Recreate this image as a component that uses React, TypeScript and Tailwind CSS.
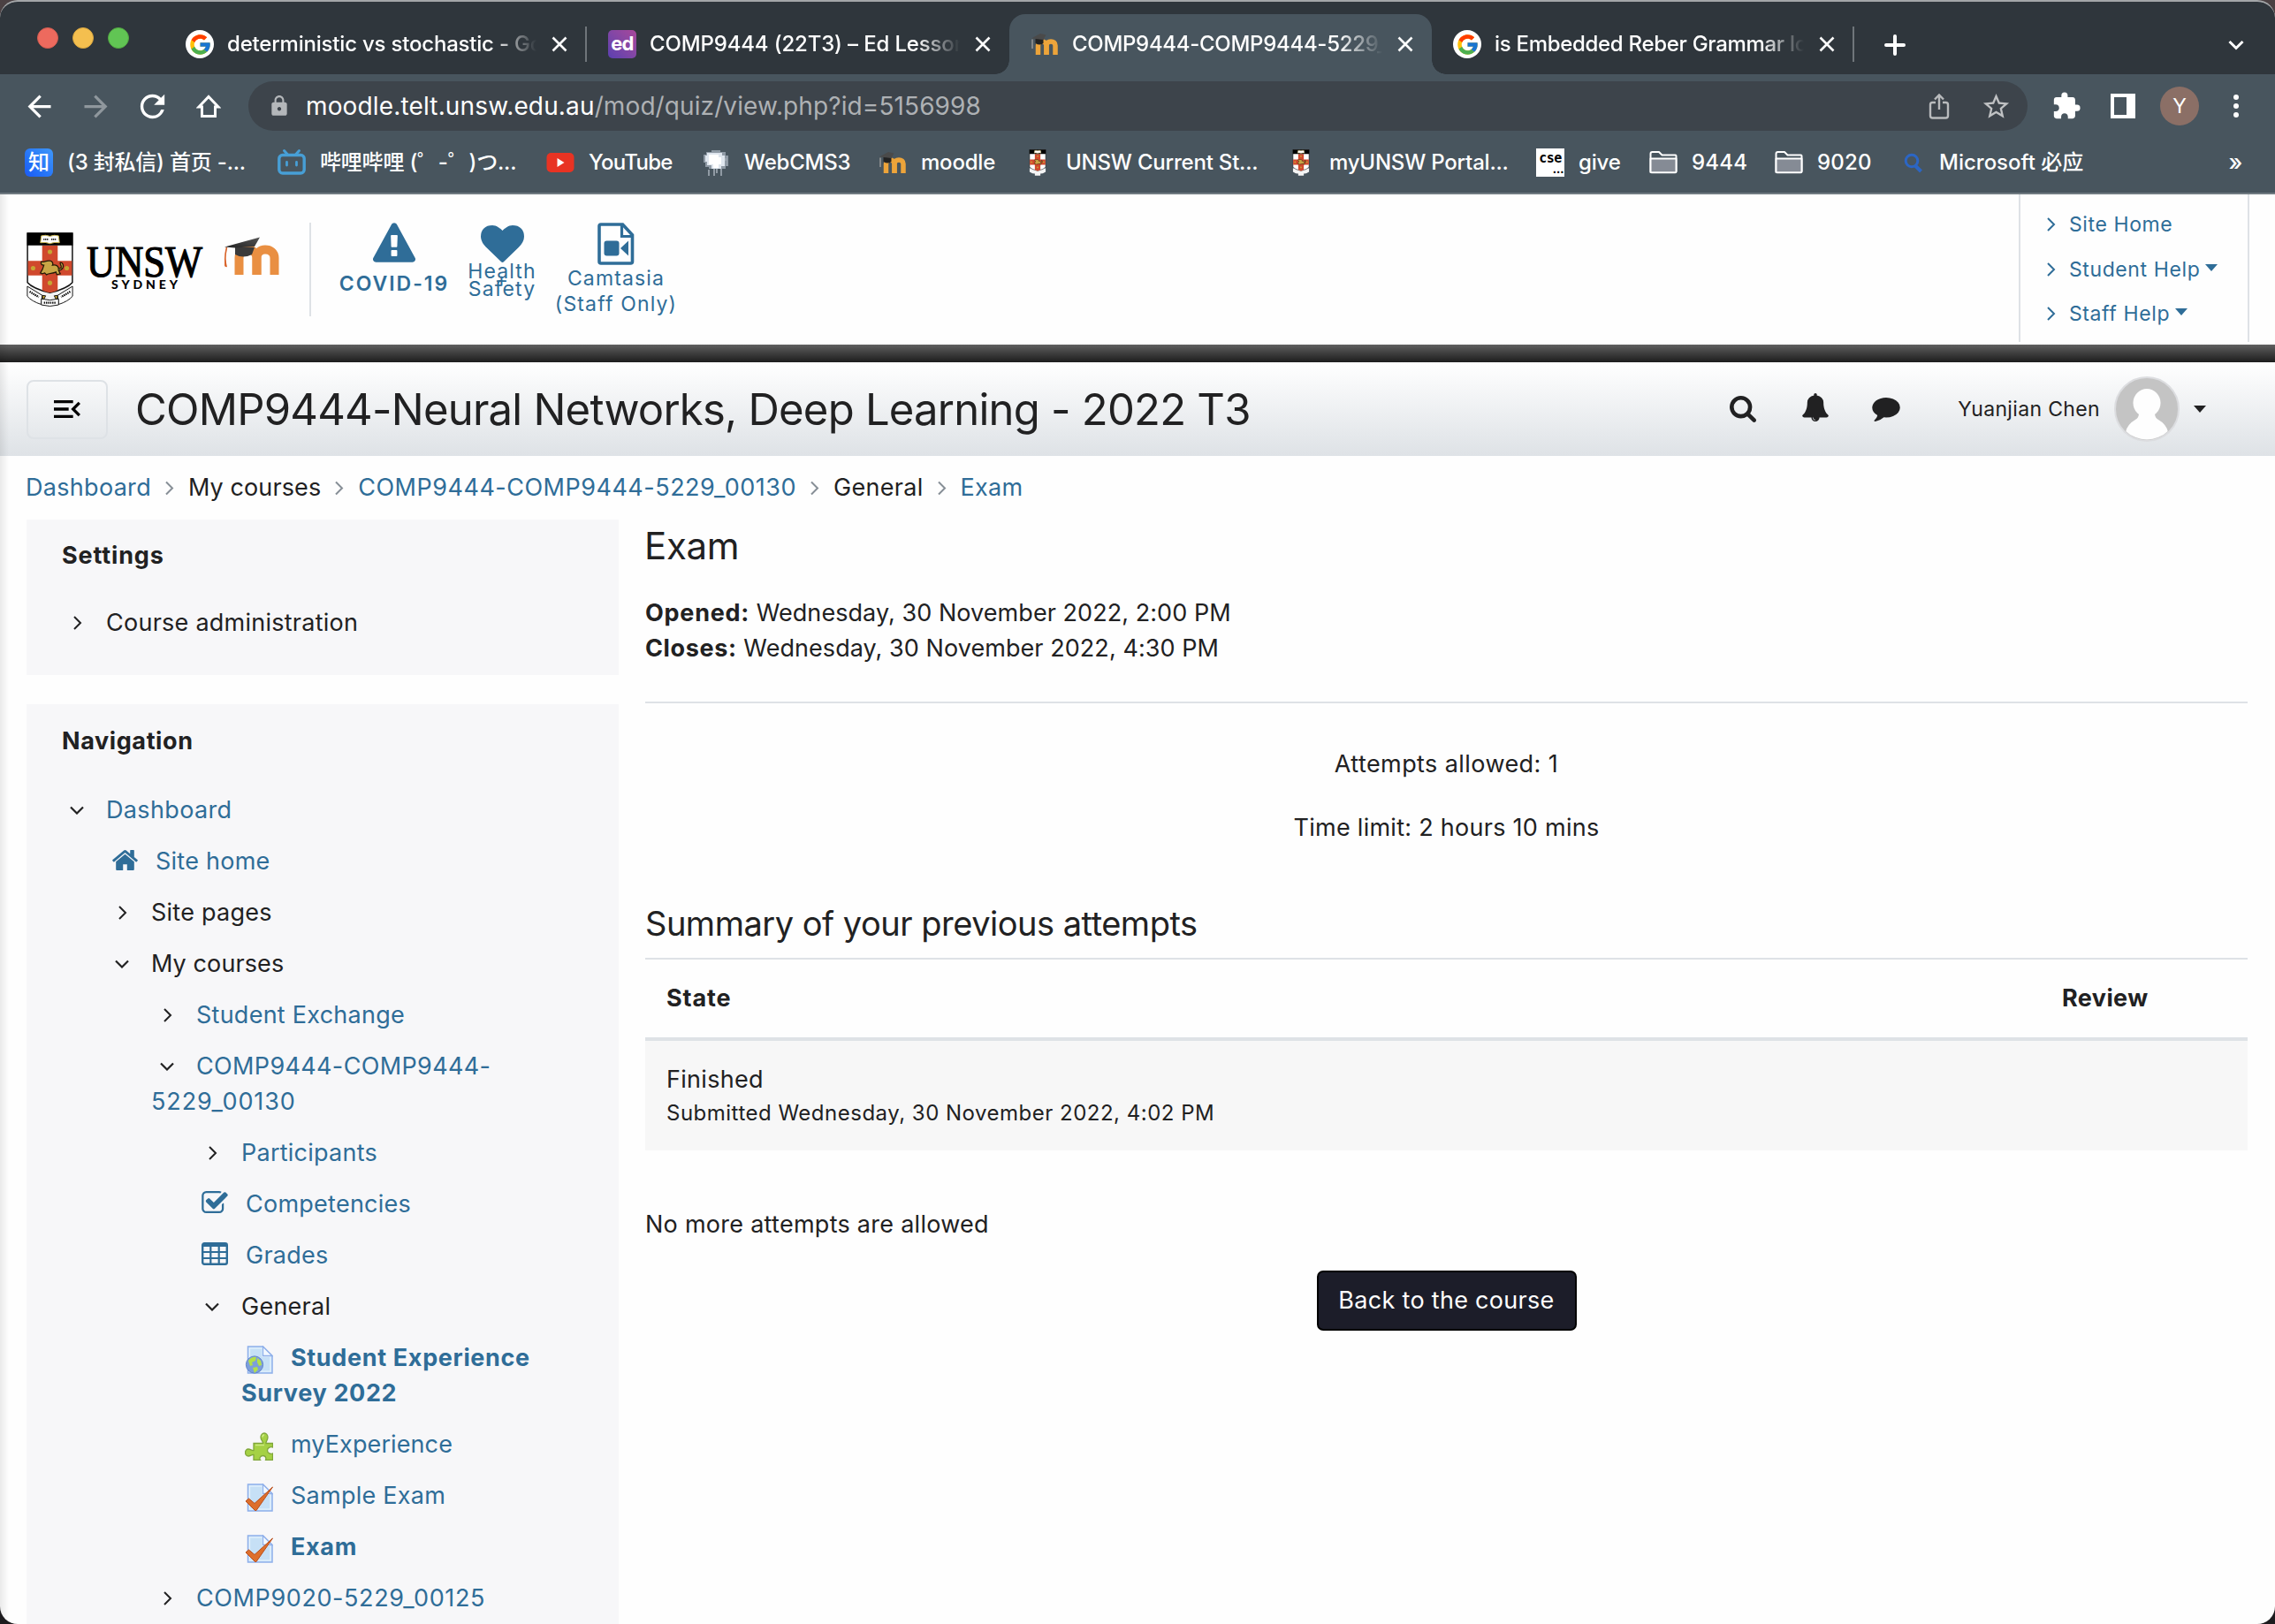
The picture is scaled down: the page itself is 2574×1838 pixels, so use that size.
import React from "react";
import { FcGoogle } from "react-icons/fc";
import {
  MdArrowBack,
  MdArrowForward,
  MdRefresh,
  MdStarBorder,
  MdExtension,
  MdMenuOpen,
  MdLock,
} from "react-icons/md";

/* ---------- small drawings ---------- */

function CloseX() {
  return (
    <svg className="size-[18px] shrink-0" viewBox="0 0 18 18" fill="none" stroke="#fff" strokeWidth="2.6">
      <path d="M1.5 1.5 16.5 16.5M16.5 1.5 1.5 16.5" />
    </svg>
  );
}

function GoogleIcon() {
  return (
    <span className="flex size-8 items-center justify-center rounded-full bg-white">
      <FcGoogle className="size-[27px]" />
    </span>
  );
}

function EdIcon() {
  return (
    <span className="flex size-8 items-center justify-center rounded-[5px] bg-linear-to-tr from-[#5b3fb0] to-[#a8479a] pb-[3px] text-[22px] leading-none font-bold tracking-[-0.8px] text-white">
      ed
    </span>
  );
}

function MoodleMark({ className }: { className: string }) {
  return (
    <svg className={className} viewBox="0 0 64 44" fill="none">
      <defs>
        <linearGradient id="mo" x1="0" x2="1">
          <stop offset="0" stopColor="#e5813d" />
          <stop offset="1" stopColor="#ee9a45" />
        </linearGradient>
        <linearGradient id="cap" x1="0" x2="1" y1="1" y2="0">
          <stop offset="0" stopColor="#222" />
          <stop offset="1" stopColor="#555" />
        </linearGradient>
      </defs>
      <g stroke="#e98f42" strokeWidth="10">
        <path d="M17.500 43V24c0-6 4-9.500 9-9.500s11 3 11 9.500v19" />
        <path d="M37.500 43V24c0-6 4-9.500 9.500-9.500s10.500 3 10.500 9.500v19" />
      </g>
      <path d="M13 11.500v8.500q9 5 19 0l3-8z" fill="#3a3a3a" />
      <path d="M1 11.500 41 .5l-6 10.500-22 1.500z" fill="url(#cap)" />
      <path d="M3.500 12c-1.500 6-2.500 14-1 22" stroke="#d9632a" strokeWidth="1.600" />
      <path d="M2 24l2 10.500-3-2z" fill="#d9632a" />
    </svg>
  );
}

function MoodleFavicon() {
  return (
    <svg className="size-8" viewBox="0 0 32 32" fill="none">
      <g stroke="#eda43a" strokeWidth="5.500">
        <path d="M8.500 28V17.500c0-3 2-4.500 4.500-4.500s5 1.500 5 4.500V28" />
        <path d="M18 28V17.500c0-3 2-4.500 5-4.500s5 1.500 5 4.500V28" />
      </g>
      <path d="M5.500 10v5q5 3 9 0V9z" fill="#222" />
      <path d="M1 9.500 11 4l6.500 1.500L14.500 11z" fill="#4a4a4a" />
      <path d="M2 10.500V21" stroke="#999" strokeWidth="1.500" />
    </svg>
  );
}

function Crest({ className, detailed }: { className: string; detailed?: boolean }) {
  return (
    <svg className={className} viewBox="0 0 54 86">
      <path d="M1 61 27 69l26-8v12l-9 5-8 1v6H18v-6l-8-1-9-5z" fill="#f4f4f4" />
      <path d="M1 1h52v57q-6 7-26 12Q7 65 1 58z" fill="#fff" stroke="#111" strokeWidth="1.500" />
      <path d="M18 15h18v52q-4 2-9 3-5-1-9-3z" fill="#d0492d" />
      <path d="M1.500 33h51v17h-51z" fill="#d0492d" />
      <path d="M.5.500h53V15H.5z" fill="#000" />
      <path d="M17 4q5-1.500 10 .5 5-2 10-.5l1 8q-6-1-11 1-5-2-11-1z" fill="#fff" stroke="#c9b44d" strokeWidth="1" />
      {detailed && <path d="M19.500 8h6M28.500 8h6" stroke="#222" strokeWidth="1.800" strokeDasharray="1.300 .6" />}
      <g fill="#c6a634">
        <circle cx="27" cy="22.500" r="2.600" />
        <circle cx="7.500" cy="41.500" r="2.600" />
        <circle cx="46.500" cy="41.500" r="2.600" />
        <circle cx="27" cy="58.500" r="2.600" />
      </g>
      <path
        d="M16 47c2-3 3-5 4-9-3 0-4-2-3-4 3 1 6-2 10-1 3 .5 4 3 3 5 4-1 7 1 7 4l3-1c1-3-2-4-1-6 3 0 4 3 3 6-1 2-3 3-5 3l2 4-4 1-1-3c-4 2-8 1-11 3l-2-2-3 1z"
        fill="#c9a646"
        stroke="#241a08"
        strokeWidth="1.300"
      />
      {detailed && (
        <g stroke="#111" strokeWidth="1" fill="none">
          <path d="M.8 62.500 18 73l-1 10.500Q6 80 .8 74z" fill="#fff" />
          <path d="M53.200 62.500 36 73l1 10.500Q48 80 53.200 74z" fill="#fff" />
          <path d="m18 73 4 .5-3 6zM36 73l-4 .5 3 6z" fill="#c6a634" />
          <path d="M17 77q10 3 20 0v7q-10 3-20 0z" fill="#fff" />
          <path d="m3.500 68.500 10.500 6.500M50.500 68.500 40 75M20 81.500h14" strokeWidth="2.400" strokeDasharray="1.500 .9" />
        </g>
      )}
    </svg>
  );
}

function BilibiliIcon() {
  return (
    <svg className="size-8" viewBox="0 0 32 32" fill="none" stroke="#479fd6" strokeLinecap="round">
      <path d="m7.500 2.500 4 4.500M24.500 2.500l-4 4.500" strokeWidth="3" />
      <rect x="1.800" y="7.500" width="28.400" height="20.500" rx="4" strokeWidth="3.400" />
      <path d="M10.500 15.500v3.500M21.500 15.500v3.500" strokeWidth="2.800" />
    </svg>
  );
}

function YouTubeIcon() {
  return (
    <svg className="size-8" viewBox="0 0 32 32">
      <rect x="0.500" y="5" width="31" height="22" rx="5" fill="#e83323" />
      <path d="M12.500 11v10l8-5z" fill="#fff" />
    </svg>
  );
}

function WebCmsIcon() {
  return (
    <svg className="size-8" viewBox="0 0 32 32">
      <path d="M5 4h6V2h10v2h6v4h3v12h-3v3H8v-2H4v-5H2V7h3z" fill="#8f9aa5" />
      <path d="M6 5h17v3h3v12h-4v3H11v-4H6v-4H4V8h2z" fill="#dfe6ee" />
      <path d="M8 7h11v3h3v8h-3v4h-6v-4H8z" fill="#fff" />
      <path d="M8 24v7M14 23v8M17 23v5M22 23v8M27 11v3" stroke="#a4adb6" strokeWidth="1.600" />
    </svg>
  );
}

function FolderIcon() {
  return (
    <svg className="size-8" viewBox="0 0 32 32" stroke="#fff" strokeWidth="2" strokeLinejoin="round">
      <path d="M1.500 27V6q0-2 2-2h7.500l3.500 3.500h15q1 0 1 1V26q0 1-1 1z" fill="none" />
      <path d="M1.500 11.500h29V26q0 1.200-1.200 1.200H2.700q-1.200 0-1.200-1.200z" fill="#858b95" />
    </svg>
  );
}

function SearchBlueIcon() {
  return (
    <svg className="size-8" viewBox="0 0 32 32" fill="none" stroke="#2c66c4">
      <circle cx="17" cy="14" r="6.800" strokeWidth="3" />
      <path d="m21 19.500 6.500 6.500" strokeWidth="4" />
    </svg>
  );
}

function CseIcon() {
  return (
    <span className="flex size-8 flex-col bg-white font-['DejaVu_Sans_Mono',monospace] text-black">
      <span className="pt-[2px] text-center text-[15px] leading-[18px] font-bold tracking-[-0.5px]">cse</span>
      <span className="pr-[2px] text-right text-[12px] leading-[8px] font-bold tracking-[-3px]">...</span>
    </span>
  );
}

function ZhihuIcon() {
  return (
    <span className="flex size-8 items-center justify-center rounded-[6px] bg-linear-to-tr from-[#1c59f4] to-[#3f97fa] text-[24px] leading-none text-white">
      知
    </span>
  );
}

function Glyph({ box, d, className }: { box: string; d: string; className: string }) {
  return (
    <svg className={className} viewBox={box} fill="currentColor">
      <path d={d} />
    </svg>
  );
}

const WARNING =
  "M1024 1375v-190q0-14-9.500-23.500t-22.500-9.500h-192q-13 0-22.500 9.500t-9.500 23.500v190q0 14 9.500 23.500t22.500 9.500h192q13 0 22.500-9.500t9.500-23.500zM1022 1001l18-459q0-12-10-19-13-11-24-11h-220q-11 0-24 11-10 7-10 21l17 457q0 10 10 16.500t24 6.500h185q14 0 23.500-6.500t10.500-16.500zM1008 67l768 1408q35 63-2 126-17 29-46.500 46t-63.500 17h-1536q-34 0-63.500-17t-46.500-46q-37-63-2-126l768-1408q17-31 47-49t65-18 65 18 47 49z";
const HEART =
  "M896 1664q-26 0-44-18l-624-602q-10-8-27.500-26t-55.500-65.500-68-97.500-53.500-121-23.500-138q0-220 127-344t351-124q62 0 126.500 21.500t120 58 95.500 68.500 76 68q36-36 76-68t95.500-68.500 120-58 126.500-21.500q224 0 351 124t127 344q0 221-229 450l-623 600q-18 18-44 18z";
const SEARCH =
  "M1216 832q0-185-131.500-316.500t-316.500-131.500-316.500 131.500-131.500 316.500 131.500 316.500 316.500 131.500 316.500-131.500 131.500-316.500zm512 832q0 52-38 90t-90 38q-54 0-90-38l-343-342q-179 124-399 124-143 0-273.500-55.500t-225-150-150-225-55.500-273.500 55.500-273.500 150-225 225-150 273.500-55.500 273.500 55.500 225 150 150 225 55.500 273.500q0 220-124 399l343 343q37 37 37 90z";
const BELL =
  "M912 1696q0-16-16-16-59 0-101.500-42.500t-42.500-101.500q0-16-16-16t-16 16q0 73 51.500 124.500t124.500 51.500q16 0 16-16zm816-288q0 52-38 90t-90 38h-448q0 106-75 181t-181 75-181-75-75-181h-448q-52 0-90-38t-38-90q50-42 91-88t85-119.500 74.500-158.500 50-206 19.500-260q0-152 117-282.500t307-158.500q-8-19-8-39 0-40 28-68t68-28 68 28 28 68q0 20-8 39 190 28 307 158.500t117 282.500q0 139 19.500 260t50 206 74.500 158.500 85 119.500 91 88z";
const COMMENT =
  "M1792 896q0 174-120 321.500t-326 233-450 85.500q-70 0-145-8-198 175-460 242-49 14-114 22-17 2-30.500-9t-17.500-29v-1q-3-4-.5-12t2-10 4.500-9.500l6-9 7-8.500 8-9q7-8 31-34.500t34.500-38 31-39.500 32.500-51 27-59 26-76q-157-89-247.500-220t-90.500-281q0-130 71-248.500t191-204.500 286-136.500 348-50.500q244 0 450 85.500t326 233 120 321.500z";
const HOME =
  "M1472 992v480q0 26-19 45t-45 19h-384v-384h-256v384h-384q-26 0-45-19t-19-45v-480q0-1 .5-3t.5-3l575-474 575 474q1 2 1 6zm223-69l-62 74q-8 9-21 11h-3q-13 0-21-7l-692-577-692 577q-12 8-24 7-13-2-21-11l-62-74q-8-10-7-23.500t11-21.500l719-599q32-26 76-26t76 26l244 204v-195q0-14 9-23t23-9h192q14 0 23 9t9 23v408l219 182q10 8 11 21.500t-7 23.500z";
const CHECK_SQUARE =
  "M1472 930v318q0 119-84.500 203.500t-203.500 84.500h-832q-119 0-203.500-84.500t-84.500-203.500v-832q0-119 84.500-203.500t203.500-84.500h832q63 0 117 25 15 7 18 23 3 17-9 29l-49 49q-10 10-23 10-3 0-9-2-23-6-45-6h-832q-66 0-113 47t-47 113v832q0 66 47 113t113 47h832q66 0 113-47t47-113v-254q0-13 9-22l64-64q10-10 23-10 6 0 12 3 20 8 20 29zm231-489l-814 814q-24 24-57 24t-57-24l-430-430q-24-24-24-57t24-57l110-110q24-24 57-24t57 24l263 263 647-647q24-24 57-24t57 24l110 110q24 24 24 57t-24 57z";

function VideoFileIcon() {
  return (
    <svg className="h-12 w-[42px]" viewBox="0 0 42 48" fill="none" stroke="#2f6d98">
      <path d="M2 4q0-2 2-2h24.500L39.500 14v30q0 2-2 2H4q-2 0-2-2z" strokeWidth="3.600" />
      <path d="M27.500 2v13.500h12" strokeWidth="3.200" />
      <rect x="7.500" y="20.500" width="17" height="17" rx="3" fill="#2f6d98" stroke="none" />
      <path d="M26 29l9-8.500v17z" fill="#2f6d98" stroke="none" />
    </svg>
  );
}

function ChevronRight({ className }: { className: string }) {
  return (
    <svg className={className} viewBox="0 0 10 16" fill="none" stroke="currentColor" strokeWidth="2">
      <path d="m1 1 7 7-7 7" />
    </svg>
  );
}

function ChevronDown() {
  return (
    <svg className="h-[10px] w-4" viewBox="0 0 16 10" fill="none" stroke="currentColor" strokeWidth="2.200">
      <path d="m1 1.500 7 7 7-7" />
    </svg>
  );
}

function Caret() {
  return <span className="border-x-[7px] border-t-[8px] border-x-transparent border-t-current" />;
}

function TableIcon() {
  return (
    <svg className="h-[26px] w-[30px]" viewBox="0 0 30 26" fill="none" stroke="#2f6d98">
      <rect x="1.200" y="1.200" width="27.600" height="23.600" rx="2" strokeWidth="2.400" />
      <path d="M1 3h28" strokeWidth="4" />
      <path d="M1 11h28M1 18h28M10.300 3v22M19.700 3v22" strokeWidth="2.200" />
    </svg>
  );
}

function Page() {
  return (
    <>
      <path d="M3.500 1h17L31 11.500V31H3.500z" fill="#cfe4f8" stroke="#8fb0ea" strokeWidth="1.500" />
      <path d="M5.500 3h14.500v9.500h9V29H5.500z" fill="#c6e0f6" stroke="#e6f3fd" strokeWidth="1.200" />
      <path d="M20.500 1 31 11.500H20.500z" fill="#f2f8ff" stroke="#8fb0ea" strokeWidth="1.300" />
    </>
  );
}

function UrlIcon() {
  return (
    <svg className="size-8" viewBox="0 0 32 32">
      <Page />
      <circle cx="11" cy="21.500" r="9.600" fill="#7d9fdc" stroke="#5f82c8" strokeWidth="1" />
      <path d="M4 17q4-5 9-4l-1 4-4 2 1 3-3 1zM14 14l4 3 1 5-3 1-2-4zM9 25l5-1 1 3-4 4z" fill="#b4e04a" />
    </svg>
  );
}

function QuizIcon() {
  return (
    <svg className="size-8" viewBox="0 0 32 32">
      <Page />
      <path d="m1 20 3.500-3 6.500 5.500L31.500 4 13 30.500h-1.500z" fill="#dd6f2c" stroke="#b94e1c" strokeWidth="1" />
    </svg>
  );
}

function PuzzleIcon() {
  return (
    <svg className="size-8" viewBox="0 0 32 32">
      <path
        d="M10 12.500h10.500c.5-2-2.500-3.500-2.500-7a4 4.500 0 0 1 8 0c0 3.500-2.500 5-2 7h7.500V17c-2-1-6 0-6 3.500s4 4.500 6 3.500v7.500H23.500c.5-1 1-5-3-5s-4 4-3 5H10v-6c-2-.5-3.500 1.500-6 1.500a3.500 4 0 0 1 0-8c2.500 0 4 2 6 1.500z"
        fill="#a5d145"
        stroke="#7fa63a"
        strokeWidth="1.300"
      />
      <path d="M12 14.500h10M20 5.500q0-2.500 2-2.500" stroke="#cdea84" strokeWidth="1.600" fill="none" />
    </svg>
  );
}

/* ---------- browser chrome ---------- */

type TabProps = { icon: React.ReactNode; title: React.ReactNode; active?: boolean; divider?: boolean };

function Tab({ icon, title, active, divider }: TabProps) {
  return (
    <div
      className={
        active
          ? "relative flex h-[68px] w-[478px] items-center self-end rounded-t-[18px] bg-[#48555e] pl-6"
          : "relative flex h-[68px] w-[478px] items-center self-end pl-6"
      }
    >
      {active && (
        <>
          <span className="absolute bottom-0 -left-4 size-4 bg-[radial-gradient(circle_at_0_0,transparent_15.5px,#48555e_16px)]" />
          <span className="absolute -right-4 bottom-0 size-4 bg-[radial-gradient(circle_at_100%_0,transparent_15.5px,#48555e_16px)]" />
        </>
      )}
      <span className="shrink-0">{icon}</span>
      <span className="ml-[15px] w-[351px] overflow-hidden mask-[linear-gradient(to_right,#000_86%,transparent)] text-[24px] leading-8 font-medium whitespace-nowrap text-white">
        {title}
      </span>
      <span className="ml-[17px]">
        <CloseX />
      </span>
      {divider && <span className="ml-[20px] h-10 w-[2px] bg-[#6f757a]" />}
    </div>
  );
}

function TabStrip() {
  return (
    <div className="flex h-[82px] bg-[#2f363c]">
      <div className="flex w-[186px] items-center gap-4 pl-[42px]">
        <span className="size-6 rounded-full border border-[#d35c50] bg-[#ed6a5e]" />
        <span className="size-6 rounded-full border border-[#d9a63f] bg-[#f4bf4f]" />
        <span className="size-6 rounded-full border border-[#52a842] bg-[#61c554]" />
      </div>
      <Tab icon={<GoogleIcon />} title={<span className="tracking-[-0.2px]">deterministic vs stochastic - Google Search</span>} divider />
      <Tab icon={<EdIcon />} title={<span className="tracking-[-0.15px]">COMP9444 (22T3) – Ed Lessons</span>} />
      <Tab icon={<MoodleFavicon />} title={<span className="tracking-[-0.3px]">COMP9444-COMP9444-5229_00130</span>} active />
      <Tab icon={<GoogleIcon />} title={<span className="tracking-[-0.3px]">is Embedded Reber Grammar long</span>} divider />
      <div className="flex flex-1 items-center justify-between pt-4 pr-[35px] pl-[34px]">
        <svg className="size-6" viewBox="0 0 24 24" stroke="#fff" strokeWidth="4" strokeLinecap="round">
          <path d="M12 2v20M2 12h20" />
        </svg>
        <svg className="h-3 w-[18px]" viewBox="0 0 18 12" fill="none" stroke="#fff" strokeWidth="3">
          <path d="m1.500 2 7.500 7.500L16.500 2" />
        </svg>
      </div>
    </div>
  );
}

function Cell({ children }: { children: React.ReactNode }) {
  return <span className="flex w-16 shrink-0 items-center justify-center">{children}</span>;
}

function Toolbar() {
  return (
    <div className="flex h-[72px] items-center bg-[#48555e] pr-3 pl-3 text-white">
      <Cell>
        <MdArrowBack className="size-[39px]" />
      </Cell>
      <Cell>
        <MdArrowForward className="size-[39px] text-[#8f979d]" />
      </Cell>
      <Cell>
        <MdRefresh className="size-[41px]" />
      </Cell>
      <Cell>
        <svg className="size-7" viewBox="0 0 28 28" fill="none" stroke="#fff" strokeWidth="3">
          <path d="M3 15 14 3.500 25 15h-3.500v10.500h-15V15z" />
        </svg>
      </Cell>
      <div className="mr-3 ml-[13px] flex h-14 flex-1 items-center rounded-full bg-[#3d444b] pr-1 pl-[22px]">
        <MdLock className="size-[26px] text-[#b4b7ba]" />
        <span className="ml-[17px] text-[28px] leading-10 tracking-[0.1px] text-[#aeb1b4]">
          <span className="tracking-[0.15px] text-white">moodle.telt.unsw.edu.au</span>/mod/quiz/view.php?id=5156998
        </span>
        <span className="ml-auto flex">
          <Cell>
            <svg className="h-[30px] w-6" viewBox="0 0 24 30" fill="none" stroke="#b9bbbd" strokeWidth="2.400">
              <path d="M8 11H4.500Q2 11 2 13.500V26q0 2.500 2.500 2.500h15Q22 28.500 22 26V13.500Q22 11 19.500 11H16M12 19V2.500M7 7.500l5-5 5 5" />
            </svg>
          </Cell>
          <Cell>
            <MdStarBorder className="size-[35px] text-[#bfc1c3]" />
          </Cell>
        </span>
      </div>
      <Cell>
        <MdExtension className="size-[34px]" />
      </Cell>
      <Cell>
        <span className="h-7 w-7 border-[4px] border-r-[10px] border-white" />
      </Cell>
      <Cell>
        <span className="flex size-11 items-center justify-center rounded-full bg-[#8b6f66] text-[23px] leading-none">Y</span>
      </Cell>
      <Cell>
        <span className="flex flex-col gap-[4px]">
          <span className="size-[6px] rounded-full bg-white" />
          <span className="size-[6px] rounded-full bg-white" />
          <span className="size-[6px] rounded-full bg-white" />
        </span>
      </Cell>
    </div>
  );
}

function Bookmark({ w, icon, children }: { w: string; icon: React.ReactNode; children: React.ReactNode }) {
  return (
    <div className={`flex shrink-0 items-center gap-4 ${w}`}>
      <span className="flex w-8 shrink-0 justify-center">{icon}</span>
      <span className="leading-8">{children}</span>
    </div>
  );
}

function Bookmarks() {
  return (
    <div className="flex h-16 items-center border-b-2 border-[#707a81] bg-[#48555e] pr-[37px] pb-[6px] pl-7 text-[24px] font-medium tracking-[-0.2px] whitespace-nowrap text-white">
      <Bookmark w="w-[286px]" icon={<ZhihuIcon />}>
        (3 封私信) 首页 -...
      </Bookmark>
      <Bookmark w="w-[304px]" icon={<BilibiliIcon />}>
        哔哩哔哩 (゜-゜)つ...
      </Bookmark>
      <Bookmark w="w-[176px]" icon={<YouTubeIcon />}>
        <span className="tracking-[-0.7px]">YouTube</span>
      </Bookmark>
      <Bookmark w="w-[200px]" icon={<WebCmsIcon />}>
        WebCMS3
      </Bookmark>
      <Bookmark w="w-[164px]" icon={<MoodleFavicon />}>
        moodle
      </Bookmark>
      <Bookmark w="w-[298px]" icon={<Crest className="h-[30px] w-[20px]" />}>
        UNSW Current St...
      </Bookmark>
      <Bookmark w="w-[282px]" icon={<Crest className="h-[30px] w-[20px]" />}>
        myUNSW Portal...
      </Bookmark>
      <Bookmark w="w-[128px]" icon={<CseIcon />}>
        give
      </Bookmark>
      <Bookmark w="w-[142px]" icon={<FolderIcon />}>
        <span className="tracking-[0.2px]">9444</span>
      </Bookmark>
      <Bookmark w="w-[138px]" icon={<FolderIcon />}>
        <span className="tracking-[0.2px]">9020</span>
      </Bookmark>
      <Bookmark w="w-[240px]" icon={<SearchBlueIcon />}>
        <span className="tracking-normal">Microsoft 必应</span>
      </Bookmark>
      <span className="ml-auto text-[26px] leading-8">»</span>
    </div>
  );
}

/* ---------- site header ---------- */

function QuickLink({ caret, children }: { caret?: boolean; children: React.ReactNode }) {
  return (
    <a className="flex h-[50.5px] items-center">
      <ChevronRight className="h-4 w-[10px]" />
      <span className="ml-[15px] leading-8 tracking-[0.6px]">{children}</span>
      {caret && (
        <span className="mb-1 ml-[6px] flex">
          <Caret />
        </span>
      )}
    </a>
  );
}

function SiteHeader() {
  return (
    <header className="flex h-[170px] items-start pr-[29px] pl-[30px] text-[23px] whitespace-nowrap text-[#2f6d98]">
      <Crest className="mt-[43px] h-[84px] w-[53px]" detailed />
      <svg className="mt-[54px] ml-[14px] h-[56px] w-[135px]" viewBox="0 0 135 56" fill="#000">
        <text x="1" y="38.500" fontFamily="Liberation Serif, serif" fontSize="50" textLength="131" lengthAdjust="spacingAndGlyphs" stroke="#000" strokeWidth="1.200">
          UNSW
        </text>
        <text x="29" y="52.500" fontFamily="Lato, sans-serif" fontWeight="900" fontSize="14" textLength="75" lengthAdjust="spacing">
          SYDNEY
        </text>
      </svg>
      <MoodleMark className="mt-[48px] ml-[21px] h-[44px] w-[64px]" />
      <span className="mt-8 ml-[33px] h-[106px] w-[2px] bg-[#dee2e6]" />
      <div className="mt-8 ml-8 flex w-[124px] flex-col items-center">
        <Glyph className="h-[45px] w-12" box="0 0 1792 1664" d={WARNING} />
        <span className="mt-[8px] leading-8 font-semibold tracking-[2px]">COVID-19</span>
      </div>
      <div className="mt-8 ml-[19px] flex w-[82px] flex-col items-center leading-[10px] tracking-[1.1px]">
        <Glyph className="mt-[3px] h-[42px] w-[49px]" box="0 128 1792 1536" d={HEART} />
        <span className="mt-[5px]">Health</span>
        <span>+</span>
        <span>Safety</span>
      </div>
      <div className="mt-8 ml-[18px] flex w-[140px] flex-col items-center leading-[29px] tracking-[1.15px]">
        <VideoFileIcon />
        <span className="mt-[1px]">Camtasia</span>
        <span>(Staff Only)</span>
      </div>
      <nav className="ml-auto h-[167px] w-[261px] border-x-2 border-[#dee2e6] pt-[9px] pl-[30px]">
        <QuickLink>Site Home</QuickLink>
        <QuickLink caret>Student Help</QuickLink>
        <QuickLink caret>Staff Help</QuickLink>
      </nav>
    </header>
  );
}

function CourseHeader() {
  return (
    <div className="flex h-[106px] items-center bg-linear-to-b from-white to-[#dee2e6] pr-[78px] pl-[30px] whitespace-nowrap text-[#212122]">
      <button className="flex h-[67px] w-[92px] items-center justify-center rounded-[8px] border-2 border-[#dee2e6]">
        <MdMenuOpen className="size-10 text-black" />
      </button>
      <h1 className="ml-[31px] text-[49px] leading-none tracking-[-0.77px]">COMP9444-Neural Networks, Deep Learning - 2022 T3</h1>
      <Glyph className="ml-auto size-[30px]" box="64 128 1664 1664" d={SEARCH} />
      <Glyph className="mb-[5px] ml-[52px] h-8 w-[30px]" box="64 0 1664 1792" d={BELL} />
      <Glyph className="ml-[49px] h-[27px] w-8" box="0 256 1792 1536" d={COMMENT} />
      <span className="ml-[65px] text-[23px] tracking-[0.35px]">Yuanjian Chen</span>
      <svg className="ml-[16px] size-[74px]" viewBox="0 0 74 74">
        <defs>
          <clipPath id="face">
            <circle cx="37" cy="37" r="34.500" />
          </clipPath>
        </defs>
        <circle cx="37" cy="37" r="36" fill="#c4c4c4" stroke="#dcdde0" strokeWidth="2" />
        <g clipPath="url(#face)" fill="#fefefe">
          <ellipse cx="37" cy="30" rx="15.500" ry="16" />
          <path d="M28 42h18q0 5 4 7 9 5 11 14v12H13V63q2-9 11-14 4-2 4-7z" />
        </g>
      </svg>
      <span className="ml-[16px] flex">
        <Caret />
      </span>
    </div>
  );
}

/* ---------- breadcrumb ---------- */

function Breadcrumb() {
  const sep = <ChevronRight className="mx-[16px] mt-px h-[17px] w-[10px] text-[#868e96]" />;
  return (
    <nav className="flex h-[72px] items-center pl-[29px] text-[27px] tracking-[0.3px] whitespace-nowrap text-[#2f6d98]">
      <a>Dashboard</a>
      {sep}
      <span className="tracking-[0.1px] text-[#212122]">My courses</span>
      {sep}
      <a className="tracking-[0.5px]">COMP9444-COMP9444-5229_00130</a>
      {sep}
      <span className="text-[#212122]">General</span>
      {sep}
      <a>Exam</a>
    </nav>
  );
}

/* ---------- side blocks ---------- */

function Row({
  indent,
  icon,
  label,
  wrap,
  dark,
  bold,
}: {
  indent: string;
  icon: "right" | "down" | React.ReactNode;
  label: React.ReactNode;
  wrap?: React.ReactNode;
  dark?: boolean;
  bold?: boolean;
}) {
  const isToggle = icon === "right" || icon === "down";
  return (
    <div className={`py-[9px] ${indent} ${dark ? "text-[#212122]" : "text-[#2f6d98]"} ${bold ? "font-bold tracking-[0.65px]" : ""}`}>
      <div className="flex h-10 items-center">
        {isToggle ? (
          <span className="flex w-[51px] shrink-0 text-[#212122]">
            {icon === "right" ? (
              <span className="ml-[14px] flex">
                <ChevronRight className="h-4 w-[10px]" />
              </span>
            ) : (
              <span className="ml-[10px] flex">
                <ChevronDown />
              </span>
            )}
          </span>
        ) : (
          <span className="w-14 shrink-0">{icon}</span>
        )}
        <span>{label}</span>
      </div>
      {wrap && <div className="h-10 leading-10">{wrap}</div>}
    </div>
  );
}

function Sidebar() {
  return (
    <aside className="w-[670px] text-[27px] tracking-[0.25px] whitespace-nowrap text-[#212122]">
      <section className="h-[176px] bg-[#f7f7f9] pt-[21px]">
        <h2 className="pl-10 leading-10 font-bold tracking-[0.85px]">Settings</h2>
        <div className="mt-[27px]">
          <Row indent="pl-[39px]" icon="right" label="Course administration" dark />
        </div>
      </section>
      <section className="mt-[33px] h-[1100px] bg-[#f7f7f9] pt-[22px]">
        <h2 className="pl-10 leading-10 font-bold tracking-[0.6px]">Navigation</h2>
        <div className="mt-[29px]">
          <Row indent="pl-[39px]" icon="down" label={<span className="tracking-[0.35px]">Dashboard</span>} />
          <Row indent="pl-[90px]" icon={<Glyph className="mb-[3px] ml-[7px] h-[23px] w-[29px]" box="89 250 1614 1286" d={HOME} />} label="Site home" />
          <Row indent="pl-[90px]" icon="right" label="Site pages" dark />
          <Row indent="pl-[90px]" icon="down" label={<span className="tracking-[0.1px]">My courses</span>} dark />
          <Row indent="pl-[141px]" icon="right" label="Student Exchange" />
          <Row
            indent="pl-[141px]"
            icon="down"
            label={<span className="tracking-[0.35px]">COMP9444-COMP9444-</span>}
            wrap={<span className="tracking-[0.9px]">5229_00130</span>}
          />
          <Row indent="pl-[192px]" icon="right" label="Participants" />
          <Row indent="pl-[192px]" icon={<Glyph className="mb-[5px] ml-[6px] h-[25px] w-[30px]" box="64 128 1664 1408" d={CHECK_SQUARE} />} label="Competencies" />
          <Row
            indent="pl-[192px]"
            icon={
              <span className="mb-[5px] ml-[6px] block">
                <TableIcon />
              </span>
            }
            label="Grades"
          />
          <Row indent="pl-[192px]" icon="down" label="General" dark />
          <Row
            indent="pl-[243px]"
            icon={
              <span className="mt-[3px] ml-[4px] block">
                <UrlIcon />
              </span>
            }
            label="Student Experience"
            wrap="Survey 2022"
            bold
          />
          <Row
            indent="pl-[243px]"
            icon={
              <span className="mt-[3px] ml-[4px] block">
                <PuzzleIcon />
              </span>
            }
            label={<span className="tracking-[0.1px]">myExperience</span>}
          />
          <Row
            indent="pl-[243px]"
            icon={
              <span className="mt-[3px] ml-[4px] block">
                <QuizIcon />
              </span>
            }
            label="Sample Exam"
          />
          <Row
            indent="pl-[243px]"
            icon={
              <span className="mt-[3px] ml-[4px] block">
                <QuizIcon />
              </span>
            }
            label="Exam"
            bold
          />
          <Row indent="pl-[141px]" icon="right" label={<span className="tracking-[0.6px]">COMP9020-5229_00125</span>} />
        </div>
      </section>
    </aside>
  );
}

/* ---------- quiz content ---------- */

function Quiz() {
  return (
    <main className="ml-[30px] w-[1813px] text-[27px] leading-10 whitespace-nowrap text-[#212122]">
      <h2 className="text-[42px] leading-[60px] tracking-[-0.3px]">
        <span className="-ml-px">Exam</span>
      </h2>
      <p className="mt-[26px]">
        <b className="tracking-[0.75px]">Opened:</b> <span className="tracking-[0.06px]">Wednesday, 30 November 2022, 2:00 PM</span>
      </p>
      <p>
        <b className="tracking-[0.65px]">Closes:</b> <span className="tracking-[0.06px]">Wednesday, 30 November 2022, 4:30 PM</span>
      </p>
      <hr className="mt-10 border-t-2 border-[#dee2e6]" />
      <p className="mt-[49px] text-center tracking-[0.42px]">Attempts allowed: 1</p>
      <p className="mt-8 text-center tracking-[0.27px]">Time limit: 2 hours 10 mins</p>
      <h3 className="mt-[64px] text-[38px] leading-[48px] tracking-[-0.49px]">Summary of your previous attempts</h3>
      <table className="mt-[15px] w-full border-collapse text-left">
        <thead>
          <tr className="h-[91px] border-t-2 border-b-4 border-[#dee2e6]">
            <th className="pl-6 font-bold tracking-[0.9px]">State</th>
            <th className="w-[234px] pl-6 font-bold tracking-[0.4px]">Review</th>
          </tr>
        </thead>
        <tbody>
          <tr className="bg-[#f7f7f7]">
            <td className="pt-6 pb-[24px] pl-6">
              <div className="tracking-[0.3px]">Finished</div>
              <div className="text-[24px] leading-9 tracking-[0.5px]">Submitted Wednesday, 30 November 2022, 4:02 PM</div>
            </td>
            <td />
          </tr>
        </tbody>
      </table>
      <p className="mt-[64px] tracking-[0.27px]">No more attempts are allowed</p>
      <div className="mt-8 flex justify-center">
        <button className="h-[68px] w-[294px] rounded-[7px] border-2 border-black bg-[#1c1d29] tracking-[0.3px] text-white">Back to the course</button>
      </div>
    </main>
  );
}

export default function App() {
  return (
    <div className="h-screen bg-linear-to-b from-[#4b4143] to-[#1d1b1e] font-['Inter','Noto_Sans_CJK_SC',sans-serif]">
      <div className="flex h-full flex-col overflow-hidden rounded-[20px] border-t-2 border-[#a3a6a8] bg-[#fefefe]">
        <TabStrip />
        <Toolbar />
        <Bookmarks />
        <div className="relative flex-1 overflow-hidden">
          <SiteHeader />
          <div className="h-5 bg-linear-to-b from-[#606060] to-[#1e1e1e]" />
          <CourseHeader />
          <Breadcrumb />
          <div className="flex pl-[30px]">
            <Sidebar />
            <Quiz />
          </div>
          <span className="absolute inset-y-0 left-0 w-[10px] bg-linear-to-r from-black/8 to-transparent" />
        </div>
      </div>
    </div>
  );
}
